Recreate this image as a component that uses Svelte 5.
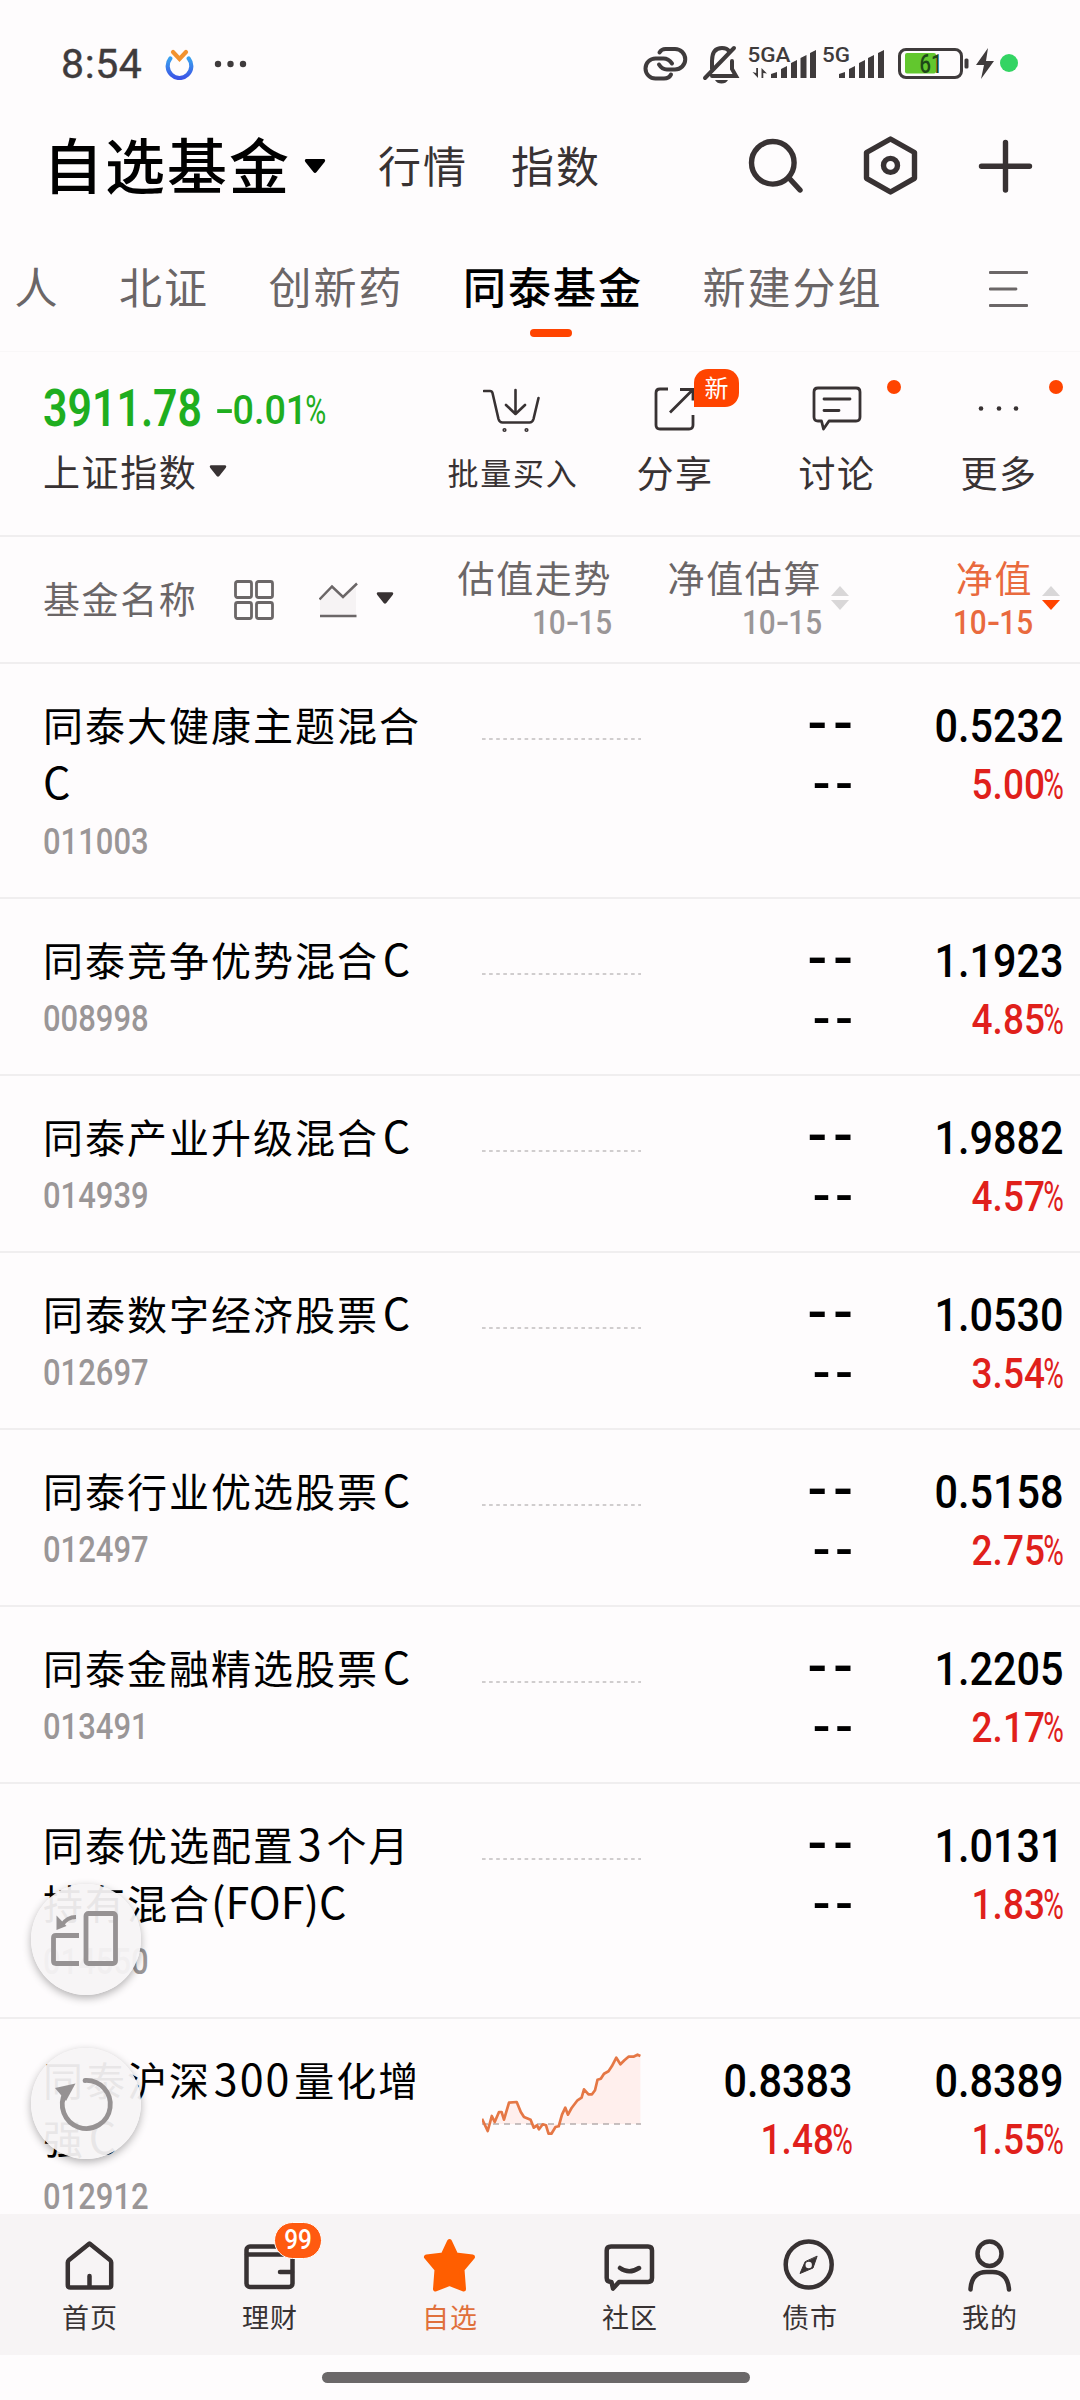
<script>
  const tabs = ['人', '北证', '创新药', '同泰基金', '新建分组'];
  let activeTab = $state('同泰基金');

  const funds = [
    { name: '同泰大健康主题混合C', code: '011003', nav: '0.5232', change: '5.00' },
    { name: '同泰竞争优势混合C', code: '008998', nav: '1.1923', change: '4.85' },
    { name: '同泰产业升级混合C', code: '014939', nav: '1.9882', change: '4.57' },
    { name: '同泰数字经济股票C', code: '012697', nav: '1.0530', change: '3.54' },
    { name: '同泰行业优选股票C', code: '012497', nav: '0.5158', change: '2.75' },
    { name: '同泰金融精选股票C', code: '013491', nav: '1.2205', change: '2.17' },
    { name: '同泰优选配置3个月持有混合(FOF)C', code: '014550', nav: '1.0131', change: '1.83' },
    {
      name: '同泰沪深300量化增强C',
      code: '012912',
      nav: '0.8389',
      change: '1.55',
      estimate: '0.8383',
      estimateChange: '1.48',
      trend: [
        [0, 66.7], [5.7, 79], [9.8, 64], [12.7, 70], [17, 60], [19.6, 60], [22, 67.7], [27, 50.7],
        [34.7, 50], [38.8, 60], [42, 65], [48.6, 67.7], [51.8, 75.7], [55, 73.3], [57, 77.3],
        [60.8, 72.3], [64, 73.3], [66.5, 81.7], [69.4, 81.7], [73.5, 75], [76.7, 74.3], [80, 62.7],
        [83.3, 55.7], [86, 62.7], [89.8, 55.7], [95.5, 48.3], [99.6, 45.7], [102, 37.3],
        [106.5, 42.3], [110, 42.3], [113, 38.3], [115.5, 27.7], [118.8, 26.7], [122, 21.7],
        [126.5, 19.3], [129.8, 14.3], [134.3, 5.7], [138.4, 12.3], [142.4, 8.3], [146.5, 4.7],
        [151.4, 4.7], [155.5, 2.7], [158.4, 4],
      ],
    },
  ];

  const nav = [
    { id: 'home', label: '首页' },
    { id: 'wallet', label: '理财', badge: '99' },
    { id: 'star', label: '自选' },
    { id: 'community', label: '社区' },
    { id: 'bond', label: '债市' },
    { id: 'me', label: '我的' },
  ];
  let activeNav = $state('star');

  // names mix hanzi with latin runs, and each kind is spaced differently
  function split(name) {
    return name
      .split(/(\d+|[A-Z()]+)/)
      .filter(Boolean)
      .map((text) => ({
        text,
        kind: /^\d/.test(text) ? 'digits' : /^[A-Z(]/.test(text) ? 'latin' : 'hanzi',
      }));
  }
</script>

{#snippet pct(value)}
  {value}<span class="pct">%</span>
{/snippet}

{#snippet caret(cls)}
  <svg class="caret {cls}" viewBox="0 0 22 16"><path d="M2 1h18q2 1 .6 3l-8 10q-1.600 1.800-3.200 0l-8-10q-1.400-2 .6-3z" /></svg>
{/snippet}

{#snippet sorter(active)}
  <svg class="sorter" width="18" height="24" viewBox="0 0 18 24">
    <path d="M9 0l9 10H0z" fill="#d9d7d8" />
    <path d="M9 24l9-10H0z" fill={active ? '#ff4400' : '#d9d7d8'} />
  </svg>
{/snippet}

<div class="page">
  <div class="status">
    <span class="time">8:54</span>
    <svg width="82" height="32" viewBox="165 48 82 32">
      <defs>
        <linearGradient id="ring" x1="0" y1="0" x2="0" y2="1">
          <stop offset="0" stop-color="#3aa0ee" />
          <stop offset="1" stop-color="#3b55e6" />
        </linearGradient>
      </defs>
      <path d="M170.300 58.500a11.800 12 0 1 0 18.400 0" fill="none" stroke="url(#ring)" stroke-width="4.200" stroke-linecap="round" />
      <path d="M173 52l6.500 7 6.500-7" fill="none" stroke="#f2922e" stroke-width="4.200" stroke-linecap="round" />
      <g fill="#3f3b3c"><circle cx="218" cy="64" r="3.200" /><circle cx="230.500" cy="64" r="3.200" /><circle cx="243" cy="64" r="3.200" /></g>
    </svg>
    <svg class="indicators" width="380" height="44" viewBox="640 42 380 44">
      <g fill="none" stroke="#3f3b3c" stroke-width="4" stroke-linecap="round">
        <path d="M659.500 52.500q2-3.500 6-3.500h9.500a10 10 0 0 1 0 20.500h-8q-5 0-8-5" />
        <path d="M671 74.500q-2 4-7 4h-8.500a10 10 0 0 1 0-20h8q5 0 8.500 5" />
        <path d="M712 69v-8q0-13 10-13 5 0 7 3M705 78l29-30M712 76h24l-4-7v-8" />
      </g>
      <path d="M715 80h13q-2 3.500-6.500 3.500t-6.500-3.500z" fill="#3f3b3c" />
      <g fill="#3f3b3c" class="net">
        <text x="747.500" y="61.500" textLength="43" lengthAdjust="spacingAndGlyphs">5GA</text>
        <text x="822" y="61.500" textLength="28" lengthAdjust="spacingAndGlyphs">5G</text>
        <path d="M752.500 72l5.500 6V68h-1.800v5zM767 73.500l-5.500-5.500v10h1.800v-5z" />
        <path d="M771 74l6-2v6h-6zM781 69l6-3v12h-6zM791 63l6-3v18h-6zM800.500 58l6-3v23h-6zM810 53l6-3v28h-6z" />
        <path d="M839 74l6-2v6h-6zM849 69l6-3v12h-6zM859 63l6-3v18h-6zM868 58l6-3v23h-6zM878 53l6-3v28h-6z" />
      </g>
      <rect x="899.500" y="49.500" width="62" height="28" rx="6.500" fill="none" stroke="#3f3b3c" stroke-width="3" />
      <rect x="905" y="53" width="31" height="20.500" rx="2" fill="#62c72e" />
      <rect x="964.500" y="58.500" width="4" height="10" rx="1.500" fill="#3f3b3c" />
      <text class="level" x="919.500" y="73" textLength="23" lengthAdjust="spacingAndGlyphs">61</text>
      <path d="M988 48l-12 17h8l-3 14 13-18h-8z" fill="#3f3b3c" />
      <circle cx="1009" cy="63" r="9" fill="#33d463" />
    </svg>
  </div>

  <header class="title-bar">
    <h1>自选基金</h1>
    {@render caret('large')}
    <span class="link">行情</span>
    <span class="link">指数</span>
    <svg class="tools" width="290" height="64" viewBox="745 134 290 64">
      <g fill="none" stroke="#383233" stroke-width="5.400" stroke-linecap="round" stroke-linejoin="round">
        <circle cx="772.800" cy="162.800" r="21.300" />
        <path d="M789 178l11 12" />
        <path d="M890.500 139l24 13.500v25.800l-24 13.700-24-13.700v-25.800z" />
        <circle cx="890.500" cy="165.400" r="7" />
        <path d="M981.500 166.300h48M1005.500 142.500v47.500" />
      </g>
    </svg>
  </header>

  <nav class="tabs">
    {#each tabs as tab}
      <button class="tab" class:active={tab === activeTab} onclick={() => (activeTab = tab)}>{tab}</button>
    {/each}
    <svg class="menu" width="39" height="38" viewBox="0 0 39 38">
      <path d="M1 2.500h37M1 19h26M1 35.500h37" stroke="#6b6667" stroke-width="2.800" stroke-linecap="round" />
    </svg>
  </nav>

  <section class="index">
    <div class="quote">
      <div class="quote-values">
        <span class="points">3911.78</span>
        <span class="delta"><span class="minus">-</span>0.01<span class="pct">%</span></span>
      </div>
      <div class="quote-name">上证指数 {@render caret('')}</div>
    </div>
    <div class="actions">
      <div class="action">
        <svg width="60" height="50" viewBox="483 388 60 50" fill="none" stroke="#383233" stroke-width="2.600" stroke-linecap="round" stroke-linejoin="round">
          <path d="M484 395h6q2 0 2.500 2l6 26q1 3.500 4 3.500h27q3 0 4-3.500l5-21" />
          <path d="M515.500 394v22M506 409l9.500 9 9.500-9" />
          <circle cx="504.500" cy="434" r=".8" /><circle cx="526.500" cy="434" r=".8" />
        </svg>
        <span class="action-label small">批量买入</span>
      </div>
      <div class="action">
        <svg width="44" height="50" viewBox="652 385 44 50" fill="none" stroke="#383233" stroke-width="2.800">
          <path d="M667 390h-8q-4 0-4 4v32q0 4 4 4h29q4 0 4-4v-10M669 413.500l22-22M679 390.500h13v11" />
        </svg>
        <span class="action-label">分享</span>
        <span class="new-badge">新</span>
      </div>
      <div class="action">
        <svg width="52" height="50" viewBox="811 384 52 50" fill="none" stroke="#383233" stroke-width="2.800" stroke-linejoin="round" stroke-linecap="round">
          <path d="M818 388h38q4 0 4 4v25q0 4-4 4h-27l-5.500 8-2-8h-3.500q-4 0-4-4v-25q0-4 4-4zM824 399h26M824 410.500h15" />
        </svg>
        <span class="action-label">讨论</span>
        <i class="dot"></i>
      </div>
      <div class="action">
        <svg width="44" height="50" viewBox="977 384 44 50" fill="#383233">
          <circle cx="981" cy="408.500" r="2.300" /><circle cx="999" cy="408.500" r="2.300" /><circle cx="1016" cy="408.500" r="2.300" />
        </svg>
        <span class="action-label">更多</span>
        <i class="dot"></i>
      </div>
    </div>
  </section>

  <div class="grid head">
    <div class="head-name">
      <span>基金名称</span>
      <svg class="tiles" width="40" height="40" viewBox="0 0 40 40" fill="none" stroke="#6b6667" stroke-width="2.800">
        <rect x="1.500" y="1.500" width="16" height="16" rx="2" /><rect x="22.500" y="1.500" width="16" height="16" rx="2" />
        <rect x="1.500" y="22.500" width="16" height="16" rx="2" /><rect x="22.500" y="22.500" width="16" height="16" rx="2" />
      </svg>
      <svg class="chart" width="39" height="36" viewBox="0 0 39 36" fill="none" stroke="#6b6667" stroke-width="2.500">
        <path d="M1 17L13 4.500l11 10.500L37 2v32H1z" fill="#f6f3f4" stroke="none" />
        <path d="M.5 17.500L13 4.500l11 10.500L38 1.500M1 34h36.500" />
      </svg>
      {@render caret('')}
    </div>
    <div class="col"><span>估值走势</span><span class="date">10<b>-</b>15</span></div>
    <div class="col"><span>净值估算</span><span class="date">10<b>-</b>15</span>{@render sorter(false)}</div>
    <div class="col sorted"><span>净值</span><span class="date">10<b>-</b>15</span>{@render sorter(true)}</div>
  </div>

  <main class="list">
    {#each funds as fund}
      <div class="grid row">
        <div class="fund">
          <div class="fund-name">{#each split(fund.name) as part, i}{#if i > 0 && !part.text.startsWith('(')}<span class="gap">{' '}</span>{/if}<span class={part.kind}>{part.text}</span>{/each}</div>
          <div class="fund-code">{fund.code}</div>
        </div>
        <div class="trend" class:filled={fund.trend}>
          {#if fund.trend}
            <svg width="160" height="86" viewBox="0 -2 160 86">
              <path d="M{fund.trend.join('L')}V72H0z" fill="#ffefed" />
              <path d="M0 72H159" stroke="#b5adad" stroke-width="1.300" stroke-dasharray="6 5" />
              <path d="M{fund.trend.join('L')}" fill="none" stroke="#e57745" stroke-width="2.700" stroke-linejoin="round" />
            </svg>
          {:else}
            <svg width="160" height="86" viewBox="0 0 160 86">
              <path d="M0 22H159" stroke="#d0cdce" stroke-width="1.800" stroke-dasharray="3.600 3.500" />
            </svg>
          {/if}
        </div>
        <div class="values">
          {#if fund.estimate}
            <span class="value">{fund.estimate}</span>
            <span class="change">{@render pct(fund.estimateChange)}</span>
          {:else}
            <span class="empty">--</span>
            <span class="empty second">--</span>
          {/if}
        </div>
        <div class="values">
          <span class="value">{fund.nav}</span>
          <span class="change">{@render pct(fund.change)}</span>
        </div>
      </div>
    {/each}
  </main>

  <nav class="bottom">
    {#each nav as item}
      <button class="nav-item" class:active={item.id === activeNav} onclick={() => (activeNav = item.id)}>
        <svg width="60" height="60" viewBox="0 0 60 60" fill="none" stroke="currentColor" stroke-width="4.500" stroke-linecap="round" stroke-linejoin="round">
          {#if item.id === 'home'}
            <path d="M29.500 9.500L50 26q1.200 1 1.200 2.500V51q0 2.500-2.500 2.500H10.300q-2.500 0-2.500-2.500V28.500q0-1.500 1.200-2.500zM29.500 42v10" />
          {:else if item.id === 'wallet'}
            <rect x="6.500" y="12.500" width="46" height="40.500" rx="3.500" />
            <path d="M7 20.500h45M40 38h12" />
          {:else if item.id === 'star'}
            <path fill="currentColor" d="M29.500 7.500l6.300 13.500 16.700 2-10.500 12.500 1.500 19.500-14-5.500-14 5.500 1.500-19.500L6.500 23l16.700-2z" stroke-width="5" />
          {:else if item.id === 'community'}
            <path d="M11 12.500h37q4 0 4 4V44q0 4-4 4H19l-6 6.500L11.500 48Q6.700 48 6.700 44V16.500q0-4 4.300-4zM20 34q9 6.500 19 0" />
          {:else if item.id === 'bond'}
            <circle cx="28.700" cy="30.500" r="23" />
            <path d="M37 22.500L33 34l-13 5.500L25 28z" fill="currentColor" stroke-width="1" />
            <circle cx="28.700" cy="31" r="3.200" fill="#f7f4f5" stroke="none" />
          {:else}
            <ellipse cx="29.500" cy="19.700" rx="12" ry="12.300" />
            <path d="M10.500 55.500q1-17.500 16-17.500h6q15 0 16.500 17.500" />
          {/if}
        </svg>
        <span>{item.label}</span>
        {#if item.badge}<em class="count"><span>{item.badge}</span></em>{/if}
      </button>
    {/each}
  </nav>
  <div class="gesture"></div>

  <div class="fab rotate">
    <svg width="110" height="111" viewBox="0 0 110 111" fill="none" stroke="#969293" stroke-width="4.800">
      <rect x="55" y="29.500" width="29.500" height="50" rx="2.500" />
      <path d="M48 51.500H25q-2.500 0-2.500 2.500v23q0 2.500 2.500 2.500h23" />
      <path d="M45 33q-9 0-14 8" stroke-width="4" />
      <path d="M25.500 31.500V46l10-4z" fill="#969293" stroke="none" />
    </svg>
  </div>
  <div class="fab refresh">
    <svg width="110" height="111" viewBox="0 0 110 111" fill="none" stroke="#969293" stroke-width="4.800">
      <path d="M54 32.500a24 24 0 1 1-19.500 12" stroke-linecap="round" />
      <path d="M24 40l20.500-4.500L35 53z" fill="#969293" stroke="none" />
    </svg>
  </div>
</div>

<style>
  :global(body) {
    background: #fefcfd;
  }

  .page {
    position: relative;
    width: 1080px;
    height: 2400px;
    overflow: hidden;
    display: flex;
    flex-direction: column;
    background: #fefcfd;
    color: #383233;
    font-family: "Noto Sans CJK SC", "Noto Sans", sans-serif;
  }

  .page > * {
    flex-shrink: 0;
    box-sizing: border-box;
  }

  svg {
    display: block;
    flex-shrink: 0;
  }

  button {
    padding: 0;
    border: 0;
    background: none;
    color: inherit;
    font: inherit;
    letter-spacing: inherit;
  }

  /* status bar */
  .status {
    display: flex;
    align-items: center;
    height: 128px;
    padding: 0 60px 0 61px;
  }

  .time {
    width: 104px;
    font: 400 41px/48px Roboto, sans-serif;
    letter-spacing: 0.6px;
    color: #3f3b3c;
    -webkit-text-stroke: 0.4px #3f3b3c;
  }

  .indicators {
    margin-left: auto;
  }

  .net text {
    font: 500 20.5px Roboto, sans-serif;
  }

  .level {
    font: 500 25px Roboto, sans-serif;
    fill: #1e4a17;
  }

  /* title */
  .title-bar {
    display: flex;
    align-items: center;
    height: 76px;
    padding: 0 45px 0 43px;
  }

  h1 {
    margin: -7px 0 0;
    font-size: 60px;
    line-height: 76px;
    font-weight: 500;
    letter-spacing: 2px;
    color: #000;
  }

  .caret {
    width: 18px;
    height: 14px;
    fill: #383233;
  }

  .caret.large {
    width: 22px;
    height: 16px;
    margin: 0 52px 0 13px;
    fill: #000;
  }

  .link {
    margin: -4px 43px 0 0;
    font-size: 43px;
    letter-spacing: 2px;
  }

  .tools {
    margin-left: auto;
  }

  /* tabs */
  .tabs {
    display: flex;
    align-items: center;
    gap: 59.5px;
    height: 148px;
    padding: 0 52px 0 14.5px;
    border-bottom: 1px solid #f9f7f8;
    font-size: 43px;
    letter-spacing: 2px;
    color: #6b6667;
  }

  .tab {
    position: relative;
    line-height: 64px;
    margin-top: 14px;
  }

  .tab.active {
    font-weight: 500;
    color: #000;
  }

  .tab.active::after {
    content: '';
    position: absolute;
    left: 50%;
    bottom: -20px;
    width: 42px;
    height: 8px;
    margin-left: -23px;
    border-radius: 4px;
    background: #ff4400;
  }

  .menu {
    margin: 22px 0 0 auto;
  }

  /* index quote and actions */
  .index {
    display: flex;
    height: 185px;
    border-bottom: 2px solid #f0eeef;
  }

  .quote {
    width: 432px;
    padding: 27px 0 0 43px;
    box-sizing: border-box;
  }

  .quote-values {
    display: flex;
    align-items: baseline;
    height: 62px;
    font-family: Roboto, sans-serif;
    color: #1fae1f;
    white-space: nowrap;
  }

  .points {
    width: 172px;
    font-size: 51px;
    line-height: 60px;
    font-weight: 600;
    transform: scaleX(0.84);
    transform-origin: left;
  }

  .delta {
    font-size: 41px;
    font-weight: 500;
    transform: translateY(-2px) scaleX(0.92);
    transform-origin: left;
  }

  .minus {
    display: inline-block;
    width: 19px;
    transform: scaleX(1.5);
    transform-origin: left;
  }

  .quote-name {
    display: flex;
    align-items: center;
    gap: 12px;
    height: 60px;
    font-size: 37px;
    letter-spacing: 1.6px;
  }

  .actions {
    flex: 1;
    display: grid;
    grid-template-columns: repeat(4, 162px);
  }

  .action {
    position: relative;
    display: flex;
    flex-direction: column;
    align-items: center;
    padding-top: 32px;
  }

  .action-label {
    height: 60px;
    line-height: 60px;
    margin-top: 8px;
    font-size: 37px;
    letter-spacing: 1.6px;
  }

  .action-label.small {
    font-size: 31px;
    letter-spacing: 1.8px;
  }

  .new-badge {
    position: absolute;
    left: 100px;
    top: 17px;
    width: 45px;
    height: 38px;
    border-radius: 14px 14px 14px 0;
    background: #ff4400;
    color: #fff;
    font-size: 24px;
    line-height: 35px;
    text-align: center;
  }

  .dot {
    position: absolute;
    right: 17px;
    top: 28px;
    width: 14px;
    height: 14px;
    border-radius: 50%;
    background: #ff4400;
  }

  /* fund table */
  .grid {
    display: grid;
    grid-template-columns: 482px 159px 210px 211px;
    box-sizing: border-box;
    border-bottom: 2px solid #f0eeef;
  }

  .head {
    height: 127px;
    font-size: 37px;
    letter-spacing: 1.6px;
    color: #6b6667;
  }

  .head-name {
    display: flex;
    align-items: center;
    padding: 0 0 2px 43px;
    margin-top: -2px;
  }

  .tiles {
    margin: 4px 45px 0 37px;
  }

  .chart {
    margin: 4px 18px 0 0;
  }

  .col {
    position: relative;
    display: flex;
    flex-direction: column;
    align-items: flex-end;
    padding: 9px 29px 0 0;
    line-height: 62px;
    white-space: nowrap;
  }

  .date {
    margin-top: -5px;
    font: 500 33px/40px Roboto, sans-serif;
    letter-spacing: 0;
    color: #9a9697;
    transform: scaleX(0.9);
    transform-origin: right;
  }

  .date b {
    display: inline-block;
    width: 14px;
    font-weight: 500;
    transform: scaleX(1.3);
    transform-origin: left;
  }

  .sorted,
  .sorted .date {
    color: #e96a3e;
  }

  .sorter {
    position: absolute;
    right: 2px;
    top: 49px;
  }

  .list {
    height: 1550px;
    overflow: hidden;
  }

  .row {
    padding: 31px 0 27px;
  }

  .fund {
    padding-left: 43px;
  }

  .fund-name {
    width: 386px;
    font-size: 40px;
    line-height: 58px;
    letter-spacing: 2px;
    color: #000;
    word-break: break-all;
  }

  .latin {
    font-size: 43px;
    line-height: 1;
    letter-spacing: 0;
  }

  .digits {
    font-size: 43px;
    line-height: 1;
    letter-spacing: 2px;
  }

  .gap {
    font-size: 8px;
    line-height: 1;
    letter-spacing: 1px;
  }

  .gap:has(+ .latin) {
    letter-spacing: 2px;
  }

  .fund-code {
    height: 55px;
    padding-top: 4px;
    font: 500 36px/55px Roboto, sans-serif;
    color: #9a9697;
    transform: scaleX(0.86);
    transform-origin: left;
  }

  .trend {
    height: 86px;
    margin-top: 22px;
  }

  .trend.filled {
    margin-top: 0;
  }

  .values {
    display: flex;
    flex-direction: column;
    align-items: flex-end;
    height: 117px;
    margin-right: -2px;
    font-family: Roboto, sans-serif;
    font-weight: 500;
    white-space: nowrap;
  }

  .value,
  .change {
    flex: none;
    height: 60px;
    font-size: 47px;
    line-height: 61px;
    color: #000;
    transform: scaleX(0.88);
    transform-origin: right;
  }

  .change {
    height: 57px;
    font-size: 42px;
    line-height: 60px;
    color: #e0201b;
  }

  .pct {
    display: inline-block;
    margin-left: -9px;
    font-weight: 400;
    transform: scaleX(0.76);
    transform-origin: right;
  }

  .empty {
    flex: none;
    height: 59px;
    margin-right: -6px;
    font-size: 58px;
    line-height: 56px;
    letter-spacing: 6px;
    color: #000;
  }

  .empty.second {
    height: 58px;
    font-size: 52px;
    line-height: 60px;
    letter-spacing: 5px;
    margin-right: -5px;
  }

  /* bottom navigation */
  .bottom {
    display: grid;
    grid-template-columns: repeat(6, 1fr);
    height: 141px;
    background: #f7f4f5;
  }

  .nav-item {
    position: relative;
    display: flex;
    flex-direction: column;
    align-items: center;
    padding-top: 20px;
    font-size: 27px;
    line-height: 40px;
    letter-spacing: 1px;
  }

  .nav-item > span {
    margin-top: 3px;
  }

  .nav-item.active {
    color: #ff5e00;
  }

  .nav-item.active > span {
    color: #e0703c;
  }

  .count {
    position: absolute;
    left: 94px;
    top: 8px;
    width: 48px;
    height: 37px;
    border: 1.5px solid #fff;
    border-radius: 20px;
    box-sizing: border-box;
    background: #ff5a10;
    color: #fff;
    font: 500 28px/34px Roboto, sans-serif;
    letter-spacing: 0;
    text-align: center;
  }

  .count span {
    display: block;
    transform: scaleX(0.87);
  }

  .gesture {
    width: 428px;
    height: 11px;
    margin: 17px auto 0 322px;
    border-radius: 6px;
    background: #6b6869;
  }

  /* floating buttons */
  .fab {
    position: absolute;
    left: 31px;
    width: 110px;
    height: 111px;
    border-radius: 50%;
    background: rgba(247, 244, 245, 0.94);
    box-shadow: 0 3px 9px rgba(0, 0, 0, 0.3);
  }

  .rotate {
    top: 1884px;
  }

  .refresh {
    top: 2048px;
  }
</style>
